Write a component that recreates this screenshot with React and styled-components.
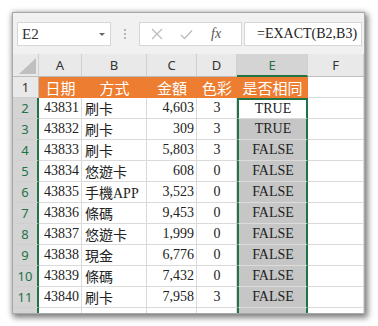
import React from "react";
import styled, { createGlobalStyle, css } from "styled-components";

const GlobalStyle = createGlobalStyle`
  html, body { margin: 0; padding: 0; background: #ffffff; }
  * { box-sizing: border-box; }
`;

const GREEN = "#217346";
const SERIF = `"Liberation Serif", "Noto Sans CJK TC", serif`;
const SANS = `"Noto Sans", "Liberation Sans", sans-serif`;

const Page = styled.div`
  width: 378px;
  height: 326px;
  padding: 12px 13px 12px 12px;
`;

const Window = styled.div`
  width: 353px;
  height: 302px;
  border: 1px solid #a8a8a8;
  background: #f1f1f1;
  box-shadow: 2px 3px 6px 1px rgba(0, 0, 0, 0.45), 0 0 6px rgba(0, 0, 0, 0.18);
  display: flex;
  flex-direction: column;
  overflow: hidden;
`;

const FormulaBar = styled.div`
  height: 41px;
  flex: none;
  display: flex;
  align-items: flex-start;
  padding: 9px 2px 0 4px;
`;

const WhiteBox = styled.div`
  height: 24px;
  background: #ffffff;
  border: 1px solid #d6d6d6;
  display: flex;
  align-items: center;
`;

const NameBox = styled(WhiteBox)`
  width: 94px;
  padding: 0 5px 0 4px;
  justify-content: space-between;
  font-family: ${SERIF};
  font-size: 15px;
  color: #333;
`;

const DropArrow = styled.span`
  width: 0;
  height: 0;
  border-left: 3px solid transparent;
  border-right: 3px solid transparent;
  border-top: 3px solid #666;
`;

const Dots = styled.div`
  width: 28px;
  height: 24px;
  display: flex;
  flex-direction: column;
  align-items: center;
  justify-content: center;
  gap: 2px;
  & > span {
    width: 2px;
    height: 2px;
    background: #b5b5b5;
  }
`;

const FuncBox = styled(WhiteBox)`
  width: 103px;
  padding: 0 0 0 11px;
  gap: 17px;
`;

const Fx = styled.span`
  font-family: ${SERIF};
  font-style: italic;
  font-size: 14px;
  color: #555;
  margin-left: 1px;
`;

const InputBox = styled(WhiteBox)`
  flex: 1;
  margin-left: 2px;
  padding-left: 12px;
  font-family: ${SERIF};
  font-size: 14px;
  color: #222;
`;

const Grid = styled.div`
  flex: 1;
  display: grid;
  grid-template-columns: 26px 43px 65px 50px 40px 71px 1fr;
  grid-template-rows: 23px;
  grid-auto-rows: 21px;
  background: #ffffff;
  overflow: hidden;
`;

const Corner = styled.div`
  background: #e9e9e9;
  border-right: 1px solid #cfcfcf;
  border-bottom: 1px solid #bdbdbd;
  display: flex;
  align-items: flex-end;
  justify-content: flex-end;
  padding: 0 2px 2px 0;
`;

const ColHead = styled.div`
  background: ${(p) => (p.$sel ? "#d4d4d4" : "#e9e9e9")};
  border-right: 1px solid #d0d0d0;
  border-bottom: ${(p) => (p.$sel ? `2px solid ${GREEN}` : "1px solid #bdbdbd")};
  display: flex;
  align-items: center;
  justify-content: center;
  font-family: ${SANS};
  font-size: 13px;
  color: ${(p) => (p.$sel ? GREEN : "#333")};
  padding-top: ${(p) => (p.$sel ? "1px" : "0")};
`;

const RowHead = styled.div`
  background: ${(p) => (p.$sel ? "#d4d4d4" : "#e9e9e9")};
  border-right: ${(p) => (p.$sel ? `2px solid ${GREEN}` : "1px solid #bdbdbd")};
  border-bottom: 1px solid #cfcfcf;
  display: flex;
  align-items: center;
  justify-content: center;
  font-family: ${SANS};
  font-size: 13px;
  color: ${(p) => (p.$sel ? GREEN : "#333")};
`;

const Cell = styled.div`
  border-right: 1px solid #dadada;
  border-bottom: 1px solid #dadada;
  display: flex;
  align-items: center;
  white-space: nowrap;
  overflow: hidden;
  font-family: ${SERIF};
  font-size: 14px;
  color: #222;
  padding: 0 2px 0 3px;
  justify-content: ${(p) =>
    p.$align === "right" ? "flex-end" : p.$align === "center" ? "center" : "flex-start"};
  ${(p) =>
    p.$head &&
    css`
      background: #ed7d31;
      border-right-color: #ed7d31;
      border-bottom-color: #ed7d31;
      color: #ffffff;
      font-size: 15px;
      justify-content: center;
    `}
`;

const SelCell = styled(Cell)`
  background: ${(p) => (p.$active ? "#ffffff" : "#c6c6c6")};
  border-left: 2px solid ${GREEN};
  border-right: 2px solid ${GREEN};
  border-top: ${(p) => (p.$top ? `2px solid ${GREEN}` : "none")};
  border-bottom: 1px solid ${(p) => (p.$active ? "#dadada" : "#dcdcdc")};
  justify-content: center;
`;

const rows = [
  ["43831", "刷卡", "4,603", "3", "TRUE"],
  ["43832", "刷卡", "309", "3", "TRUE"],
  ["43833", "刷卡", "5,803", "3", "FALSE"],
  ["43834", "悠遊卡", "608", "0", "FALSE"],
  ["43835", "手機APP", "3,523", "0", "FALSE"],
  ["43836", "條碼", "9,453", "0", "FALSE"],
  ["43837", "悠遊卡", "1,999", "0", "FALSE"],
  ["43838", "現金", "6,776", "0", "FALSE"],
  ["43839", "條碼", "7,432", "0", "FALSE"],
  ["43840", "刷卡", "7,958", "3", "FALSE"],
];

const cols = ["A", "B", "C", "D", "E", "F"];
const headers = ["日期", "方式", "金額", "色彩", "是否相同"];

export default function App() {
  return (
    <>
      <GlobalStyle />
      <Page>
        <Window>
          <FormulaBar>
            <NameBox>
              <span>E2</span>
              <DropArrow />
            </NameBox>
            <Dots>
              <span />
              <span />
              <span />
            </Dots>
            <FuncBox>
              <svg width="12" height="12" viewBox="0 0 12 12">
                <path d="M1 1 L11 11 M11 1 L1 11" stroke="#bdbdbd" strokeWidth="1.3" fill="none" />
              </svg>
              <svg width="13" height="11" viewBox="0 0 13 11">
                <path d="M1 6 L4.5 9.5 L12 1.5" stroke="#bdbdbd" strokeWidth="1.4" fill="none" />
              </svg>
              <Fx>fx</Fx>
            </FuncBox>
            <InputBox>=EXACT(B2,B3)</InputBox>
          </FormulaBar>
          <Grid>
            <Corner>
              <svg width="17" height="16" viewBox="0 0 17 16">
                <path d="M17 0 L17 16 L0 16 Z" fill="#bfbfbf" />
              </svg>
            </Corner>
            {cols.map((c) => (
              <ColHead key={c} $sel={c === "E"}>
                {c}
              </ColHead>
            ))}

            <RowHead>1</RowHead>
            {headers.map((h) => (
              <Cell key={h} $head>
                {h}
              </Cell>
            ))}
            <Cell />

            {rows.map((r, i) => (
              <React.Fragment key={i}>
                <RowHead $sel>{i + 2}</RowHead>
                <Cell $align="right">{r[0]}</Cell>
                <Cell>{r[1]}</Cell>
                <Cell $align="right">{r[2]}</Cell>
                <Cell $align="center">{r[3]}</Cell>
                <SelCell $active={i === 0} $top={i === 0}>
                  {r[4]}
                </SelCell>
                <Cell />
              </React.Fragment>
            ))}

            <RowHead $sel />
            <Cell />
            <Cell />
            <Cell />
            <Cell />
            <SelCell />
            <Cell />
          </Grid>
        </Window>
      </Page>
    </>
  );
}
